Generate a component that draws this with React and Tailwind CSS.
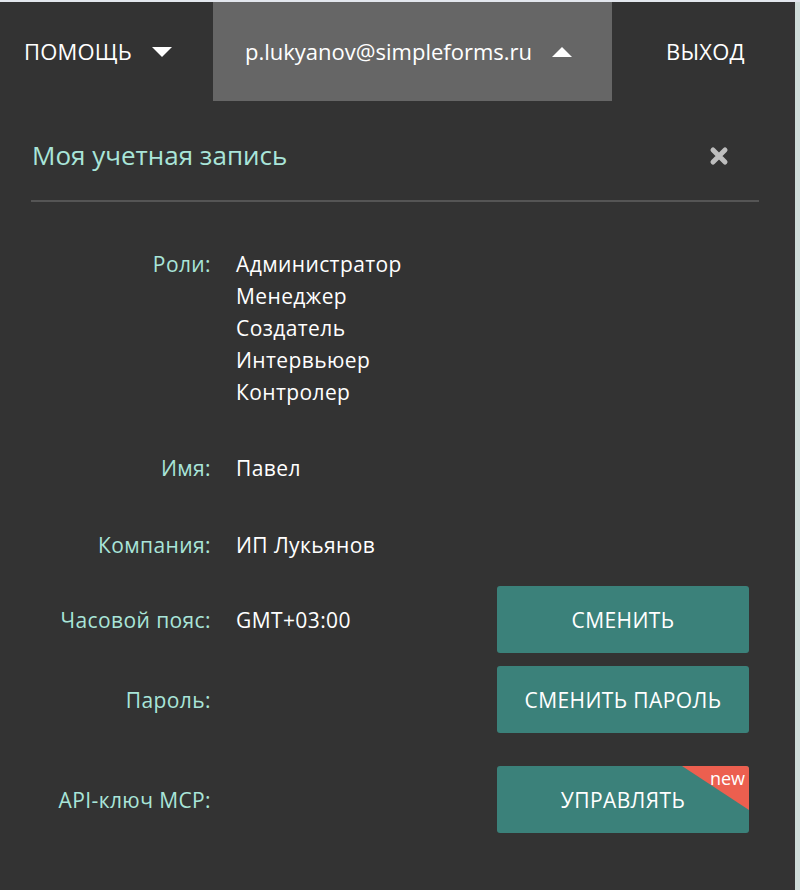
import { useState } from "react";

const Row = ({ label, children, className = "" }) => (
  <div className={`flex items-center ${className}`}>
    <div className="w-[211px] shrink-0 text-right text-[21px] tracking-[0.4px] text-[#a9e5d9]">{label}</div>
    <div className="ml-[25px] flex-1 text-[21px] tracking-[0.4px] text-white">{children}</div>
  </div>
);

const Btn = ({ children, badge }) => (
  <button className="relative w-[252px] h-[67px] pt-[3px] rounded-[3px] bg-[#3b817a] text-[21px] tracking-[0.4px] text-white uppercase">
    {badge && (
      <>
        <span className="absolute right-0 top-0 w-0 h-0 border-t-[44px] border-l-[67px] border-t-[#ec5f4f] border-l-transparent rounded-tr-[3px]" />
        <span className="absolute right-[4px] top-[2px] text-[18px] leading-[20px] tracking-normal normal-case">new</span>
      </>
    )}
    <span className="relative">{children}</span>
  </button>
);

export default function App() {
  const [open, setOpen] = useState(true);
  const roles = ["Администратор", "Менеджер", "Создатель", "Интервьюер", "Контролер"];

  return (
    <div className="w-[800px] h-[896px] bg-white" style={{ fontFamily: '"Open Sans", "Noto Sans", sans-serif' }}>
      <div className="h-[890px] flex flex-col bg-[#e3e7ee] pt-[2px]">
        <div className="flex flex-1">
          <div className="w-[795px] bg-[#333333] flex flex-col">
            {/* top menu */}
            <div className="flex h-[99px] text-white text-[22px]">
              <div className="flex items-center pl-[24px] w-[213px] tracking-[0.2px]">
                <span>ПОМОЩЬ</span>
                <svg className="ml-[20px]" width="20" height="10" viewBox="0 0 20 10"><path d="M0 0h20L10 10z" fill="#fff" /></svg>
              </div>
              <div className="flex items-center w-[399px] bg-[#666666] pl-[32px]">
                <span>p.lukyanov@simpleforms.ru</span>
                <svg className="ml-[20px]" width="20" height="10" viewBox="0 0 20 10"><path d="M0 10h20L10 0z" fill="#fff" /></svg>
              </div>
              <div className="flex items-center pl-[54px] tracking-[0.2px]">ВЫХОД</div>
            </div>

            {open && (
              <div className="px-[31px]">
                <div className="flex items-center justify-between h-[101px] pt-[10px] border-b-2 border-[#555555] mr-[5px]">
                  <span className="text-[26px] text-[#a9e5d9] pl-[1px]">Моя учетная запись</span>
                  <button onClick={() => setOpen(false)} className="mr-[30px]">
                    <svg width="20" height="20" viewBox="0 0 20 20"><path d="M4 4l12 12M16 4L4 16" stroke="#bdbdbd" strokeWidth="5" strokeLinecap="round" /></svg>
                  </button>
                </div>

                <div className="-ml-[31px] pt-[46px]">
                  <div className="flex items-start">
                    <div className="w-[211px] shrink-0 text-right text-[21px] tracking-[0.4px] leading-[32px] text-[#a9e5d9]">Роли:</div>
                    <div className="ml-[25px] flex flex-col text-[21px] tracking-[0.4px] leading-[32px] text-white">
                      {roles.map((r) => <span key={r}>{r}</span>)}
                    </div>
                  </div>

                  <Row label="Имя:" className="mt-[45px] h-[32px]">Павел</Row>
                  <Row label="Компания:" className="mt-[45px] h-[32px]">ИП Лукьянов</Row>

                  <div className="flex items-center mt-[24px]">
                    <div className="w-[211px] shrink-0 text-right text-[21px] tracking-[0.4px] text-[#a9e5d9] pt-[2px]">Часовой пояс:</div>
                    <div className="ml-[25px] w-[261px] text-[21px] tracking-[0.4px] text-white pt-[2px]">GMT+03:00</div>
                    <Btn>Сменить</Btn>
                  </div>
                  <div className="flex items-center mt-[13px]">
                    <div className="w-[211px] shrink-0 text-right text-[21px] tracking-[0.4px] text-[#a9e5d9] pt-[2px]">Пароль:</div>
                    <div className="ml-[25px] w-[261px]" />
                    <Btn>Сменить пароль</Btn>
                  </div>
                  <div className="flex items-center mt-[33px]">
                    <div className="w-[211px] shrink-0 text-right text-[21px] tracking-[0.4px] text-[#a9e5d9] pt-[2px]">API-ключ MCP:</div>
                    <div className="ml-[25px] w-[261px]" />
                    <Btn badge>Управлять</Btn>
                  </div>
                </div>
              </div>
            )}
          </div>
          <div className="flex-1 bg-[#cfdcd9]" />
        </div>
      </div>
    </div>
  );
}
